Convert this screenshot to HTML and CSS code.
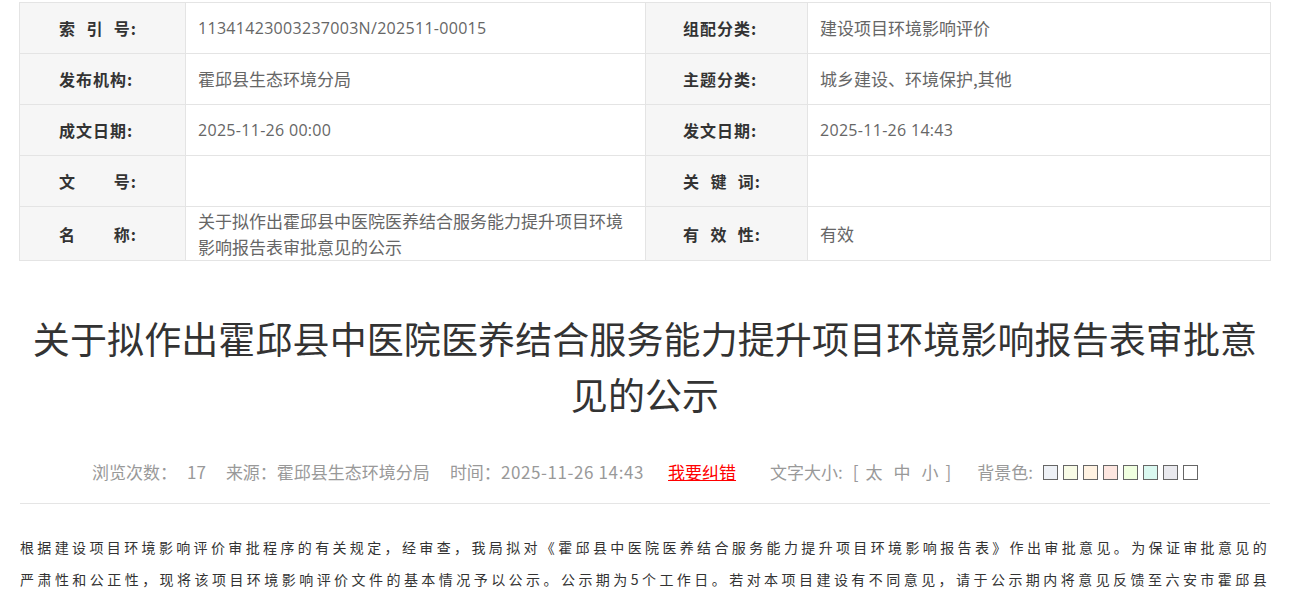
FILE: index.html
```html
<!DOCTYPE html>
<html lang="zh-CN">
<head>
    <meta charset="UTF-8">
    <meta name="viewport" content="width=device-width, initial-scale=1.0">
    <title>关于拟作出霍邱县中医院医养结合服务能力提升项目环境影响报告表审批意见的公示</title>
    <link rel="stylesheet" href="styles.css">
</head>
<body>
    <div class="page">
        <table class="info">
            <colgroup>
                <col class="c-label-l">
                <col class="c-value-l">
                <col class="c-label-r">
                <col class="c-value-r">
            </colgroup>
            <tr>
                <th><span class="lbl"><span>索</span><span>引</span><span>号:</span></span></th>
                <td class="num">11341423003237003N/202511-00015</td>
                <th class="right"><span class="lbl"><span>组配分类:</span></span></th>
                <td>建设项目环境影响评价</td>
            </tr>
            <tr>
                <th><span class="lbl"><span>发布机构:</span></span></th>
                <td>霍邱县生态环境分局</td>
                <th class="right"><span class="lbl"><span>主题分类:</span></span></th>
                <td>城乡建设、环境保护,其他</td>
            </tr>
            <tr>
                <th><span class="lbl"><span>成文日期:</span></span></th>
                <td class="num">2025-11-26 00:00</td>
                <th class="right"><span class="lbl"><span>发文日期:</span></span></th>
                <td class="num">2025-11-26 14:43</td>
            </tr>
            <tr>
                <th><span class="lbl"><span>文</span><span>号:</span></span></th>
                <td></td>
                <th class="right"><span class="lbl"><span>关</span><span>键</span><span>词:</span></span></th>
                <td></td>
            </tr>
            <tr class="tall">
                <th><span class="lbl"><span>名</span><span>称:</span></span></th>
                <td>关于拟作出霍邱县中医院医养结合服务能力提升项目环境影响报告表审批意见的公示</td>
                <th class="right"><span class="lbl"><span>有</span><span>效</span><span>性:</span></span></th>
                <td>有效</td>
            </tr>
        </table>

        <h1 class="title">关于拟作出霍邱县中医院医养结合服务能力提升项目环境影响报告表审批意见的公示</h1>

        <div class="meta">
            <span class="views">浏览次数：</span><span class="count">17</span>
            <span class="source">来源：霍邱县生态环境分局</span>
            <span class="time">时间：<em>2025-11-26 14:43</em></span>
            <a class="report" href="#">我要纠错</a>
            <span class="fsize">文字大小:<b>[</b><a href="#">太</a><a href="#">中</a><a href="#">小</a><b>]</b></span>
            <span class="bg">背景色:</span>
            <span class="swatches">
                <i class="sw1"></i><i class="sw2"></i><i class="sw3"></i><i class="sw4"></i><i class="sw5"></i><i class="sw6"></i><i class="sw7"></i><i class="sw8"></i>
            </span>
        </div>

        <div class="content">
            <p>根据建设项目环境影响评价审批程序的有关规定，经审查，我局拟对《霍邱县中医院医养结合服务能力提升项目环境影响报告表》作出审批意见。为保证审批意见的严肃性和公正性，现将该项目环境影响评价文件的基本情况予以公示。公示期为5个工作日。若对本项目建设有不同意见，请于公示期内将意见反馈至六安市霍邱县生态环境分局，以便我局依法作出审批决定。</p>
        </div>
    </div>
</body>
</html>
```

FILE: styles.css
```css
body {
    margin: 0;
    background: #FFFFFF;
    font-family: "Noto Sans CJK SC", "Microsoft YaHei", sans-serif;
    color: #333333;
}
.page {
    padding: 2px 29px 0 19px;
}
.info {
    width: 1251px;
    border-collapse: collapse;
    table-layout: fixed;
}
.c-label-l { width: 166px; }
.c-value-l { width: 460px; }
.c-label-r { width: 162px; }
.c-value-r { width: 463px; }
.info th,
.info td {
    border: 1px solid #E4E4E4;
    height: 50px;
    padding: 0 12px;
    vertical-align: middle;
}
.info th {
    background: #F6F6F6;
    text-align: left;
    padding-left: 39px;
    font-size: 16px;
    font-weight: 700;
    color: #333333;
}
.info th.right {
    padding-left: 37px;
}
.lbl {
    display: flex;
    justify-content: space-between;
    width: 78px;
    line-height: 24px;
    letter-spacing: 1px;
}
.info td {
    font-size: 17px;
    line-height: 26px;
    color: #666666;
}
.info td.num {
    font-family: "Open Sans", "Noto Sans CJK SC", sans-serif;
    font-size: 16px;
    letter-spacing: 0.3px;
}
.info tr.tall td,
.info tr.tall th {
    height: 53px;
    padding-top: 0;
    padding-bottom: 0;
}
.title {
    margin: 49px 0 0 1px;
    width: 1250px;
    text-align: center;
    font-size: 37px;
    font-weight: 400;
    line-height: 56px;
    letter-spacing: 0.1px;
    color: #333333;
}
.meta {
    width: 1250px;
    margin: 38px 0 0 1px;
    padding-bottom: 19px;
    border-bottom: 1px solid #E5E5E5;
    display: flex;
    justify-content: center;
    align-items: center;
    font-size: 17px;
    line-height: 24px;
    color: #999999;
}
.count {
    margin-left: 10px;
}
.source {
    margin-left: 20px;
}
.time {
    margin-left: 20px;
}
.time em {
    font-style: normal;
    letter-spacing: 0.6px;
}
.report {
    margin-left: 24px;
    color: #FF0000;
    text-decoration: underline;
}
.fsize {
    margin-left: 34px;
}
.fsize b {
    font-weight: 400;
    margin: 0 7px 0 10px;
}
.fsize b:last-child {
    margin: 0 0 0 7px;
}
.fsize a {
    color: #999999;
    text-decoration: none;
    margin-right: 11px;
}
.fsize a:last-of-type {
    margin-right: 0;
}
.bg {
    margin-left: 26px;
}
.swatches {
    display: flex;
    gap: 5px;
    margin-left: 10px;
}
.swatches i {
    display: block;
    width: 13px;
    height: 13px;
    border: 1px solid #666666;
}
.sw1 { background: #EEF1F6; }
.sw2 { background: #F8FBE6; }
.sw3 { background: #FFF2E2; }
.sw4 { background: #FDE6E0; }
.sw5 { background: #F0FFE0; }
.sw6 { background: #DAF8F0; }
.sw7 { background: #E9E9EE; }
.sw8 { background: #FFFFFF; }
.content {
    width: 1250px;
    margin: 27px 0 0 1px;
}
.content p {
    margin: 0;
    font-family: "Noto Sans CJK SC", sans-serif;
    font-size: 14px;
    line-height: 32px;
    letter-spacing: 3.3px;
    text-align: justify;
    color: #333333;
}
```
